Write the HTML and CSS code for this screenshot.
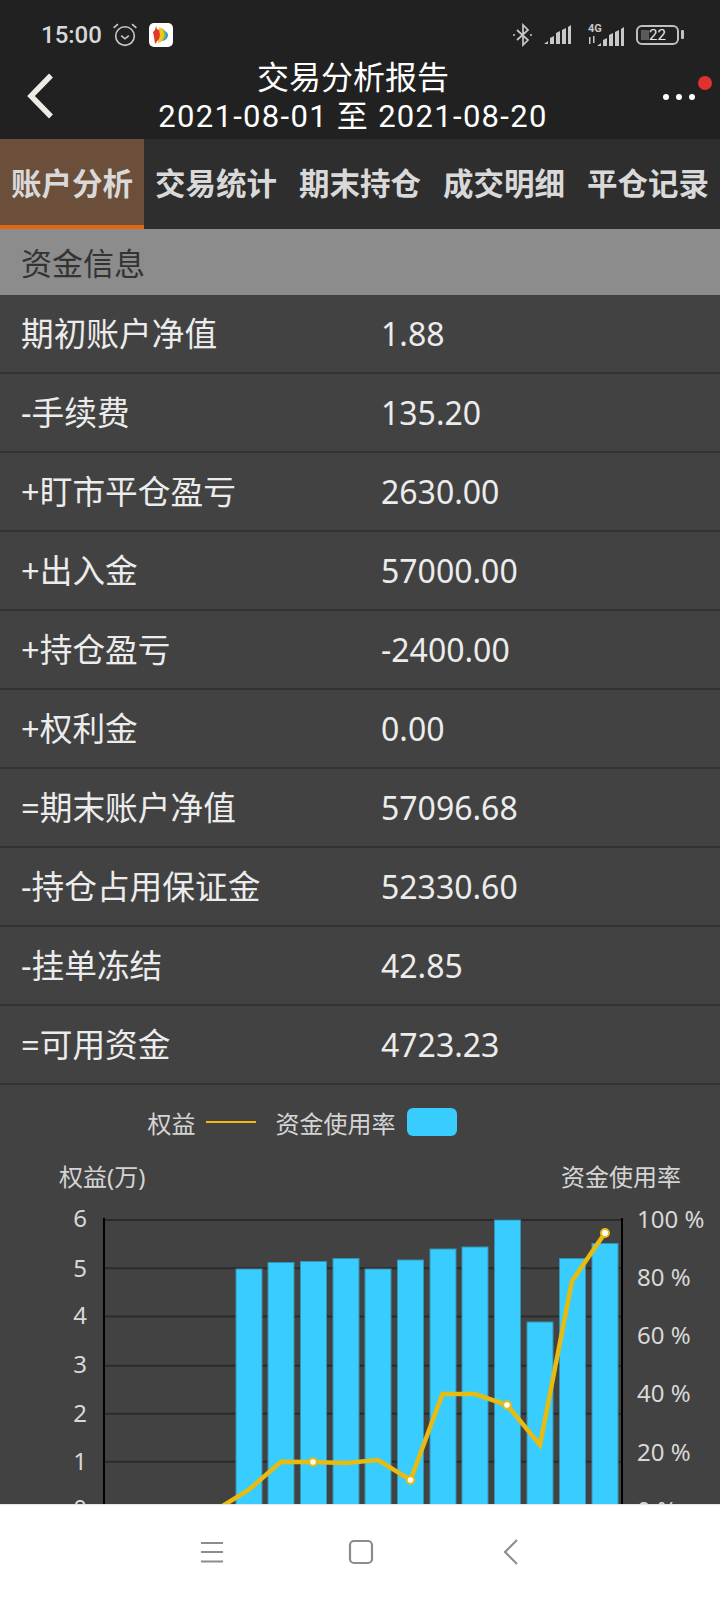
FILE: index.html
```html
<!DOCTYPE html>
<html lang="zh-CN">
<head>
    <meta charset="UTF-8">
    <meta name="viewport" content="width=device-width, initial-scale=1.0">
    <title>交易分析报告</title>
    <link rel="stylesheet" href="styles.css">
</head>
<body>

    <!-- Status bar and title -->
    <header class="header">
        <div class="status-bar">
            <span class="clock">15:00</span>
            <svg class="alarm" width="26" height="26" viewBox="0 0 24 24" fill="none" stroke="#c8c8c8" stroke-width="1.5">
                <circle cx="12" cy="13" r="8.6"/>
                <path d="M8.5 12.5l3.5 3 3.5-3"/>
                <path d="M1.5 5.5L5.5 2M22.5 5.5L18.5 2"/>
            </svg>
            <svg class="app-icon" width="24" height="24" viewBox="0 0 24 24">
                <rect width="24" height="24" rx="5" fill="#fff"/>
                <path d="M14 7c3 1 5 3 5 5s-2 5-5 6z" fill="#2f8fd8"/>
                <path d="M12 5c3 1 5 4 5 7s-3 6-6 7z" fill="#7cc242"/>
                <path d="M10 4c3 1 5 4 5 8s-3 7-6 8z" fill="#f6c51b"/>
                <path d="M7 3l1 3 2 1 1 5-1 4-4 5-1-7-1-5 2-2z" fill="#e2392d"/>
            </svg>
            <div class="status-icons">
                <svg class="bluetooth" width="22" height="24" viewBox="0 0 22 24" fill="none" stroke="#c8c8c8" stroke-width="1.7">
                    <path d="M5 7l11 10-5 5V2l5 5L5 17"/>
                    <circle cx="2" cy="12" r="1" fill="#c8c8c8" stroke="none"/>
                    <circle cx="19" cy="12" r="1" fill="#c8c8c8" stroke="none"/>
                </svg>
                <svg class="signal" width="28" height="20" viewBox="0 0 28 20" fill="#c8c8c8">
                    <path d="M0 19l4-3v3zM6 19v-6l4-2v8zM12 19V8l4-2v13zM18 19V5l4-2v16zM24 19V2l3-2v19z"/>
                </svg>
                <svg class="signal-4g" width="38" height="24" viewBox="0 0 38 24" fill="#c8c8c8">
                    <text class="net-text" x="1" y="9">4G</text>
                    <path d="M2 14h1.500v7H2zM6 13h1.500v7H6z"/>
                    <path d="M10 23l4-3v3zM16 23v-6l4-2v8zM22 23V12l4-2v13zM28 23V9l4-2v16zM34 23V6l3-2v19z"/>
                </svg>
                <div class="battery">
                    <span class="battery-level"></span>
                    <span class="battery-text">22</span>
                </div>
            </div>
        </div>
        <div class="title-bar">
            <svg class="back" width="30" height="46" viewBox="0 0 30 46" fill="none" stroke="#eeeae6" stroke-width="5.500">
                <path d="M25 2.500L5 23l20 20.500"/>
            </svg>
            <div class="title">
                <h1>交易分析报告</h1>
                <p>2021-08-01 至 2021-08-20</p>
            </div>
            <div class="more">
                <span class="dot"></span><span class="dot"></span><span class="dot"></span>
                <span class="badge"></span>
            </div>
        </div>
    </header>

    <!-- Tabs -->
    <nav class="tabs">
        <div class="tab active">账户分析</div>
        <div class="tab">交易统计</div>
        <div class="tab">期末持仓</div>
        <div class="tab">成交明细</div>
        <div class="tab">平仓记录</div>
    </nav>

    <main class="content">
        <div class="section-title">资金信息</div>

        <div class="row"><span class="row-label">期初账户净值</span><span>1.88</span></div>
        <div class="row"><span class="row-label">-手续费</span><span>135.20</span></div>
        <div class="row"><span class="row-label">+盯市平仓盈亏</span><span>2630.00</span></div>
        <div class="row"><span class="row-label">+出入金</span><span>57000.00</span></div>
        <div class="row"><span class="row-label">+持仓盈亏</span><span>-2400.00</span></div>
        <div class="row"><span class="row-label">+权利金</span><span>0.00</span></div>
        <div class="row"><span class="row-label">=期末账户净值</span><span>57096.68</span></div>
        <div class="row"><span class="row-label">-持仓占用保证金</span><span>52330.60</span></div>
        <div class="row"><span class="row-label">-挂单冻结</span><span>42.85</span></div>
        <div class="row"><span class="row-label">=可用资金</span><span>4723.23</span></div>

        <!-- Chart -->
        <section class="chart">
            <div class="legend">
                <span>权益</span>
                <span class="legend-line"></span>
                <span class="legend-name">资金使用率</span>
                <span class="legend-box"></span>
            </div>
            <div class="axis-titles">
                <span>权益(万)</span>
                <span>资金使用率</span>
            </div>
            <!-- viewBox uses the y of the page, so the numbers read like the screenshot -->
            <svg class="plot" width="720" height="320" viewBox="0 1200 720 320">
                <g class="grid">
                    <path d="M104 1220H622M104 1268.300H622M104 1316.500H622M104 1365.800H622M104 1413.800H622M104 1461.800H622M104 1510H622"/>
                </g>
                <g class="bars">
                    <rect x="236" y="1269" width="26" height="300"/>
                    <rect x="268" y="1262.500" width="26" height="300"/>
                    <rect x="300.500" y="1261.500" width="26" height="300"/>
                    <rect x="333" y="1258.500" width="26" height="300"/>
                    <rect x="365" y="1269" width="26" height="300"/>
                    <rect x="397.500" y="1260" width="26" height="300"/>
                    <rect x="430" y="1249" width="26" height="300"/>
                    <rect x="462" y="1247" width="26" height="300"/>
                    <rect x="494.500" y="1220" width="26" height="300"/>
                    <rect x="527" y="1322" width="26" height="300"/>
                    <rect x="559.500" y="1258.500" width="26" height="300"/>
                    <rect x="592" y="1243.500" width="26" height="300"/>
                </g>
                <path class="axis" d="M104 1218V1520M622 1218V1520"/>
                <polyline class="line" points="216,1510 248.500,1490 281,1461.800 313,1462 345.500,1463 378,1460 410.500,1480 442.500,1394 475,1394 507,1405 540,1445 572,1281 605,1233"/>
                <g class="marks">
                    <circle cx="313" cy="1462" r="3.800"/>
                    <circle cx="410.500" cy="1480" r="3.800"/>
                    <circle cx="507" cy="1405" r="3.800"/>
                    <circle cx="605" cy="1233" r="4"/>
                </g>
                <g class="ticks-left">
                    <text x="87" y="1227">6</text>
                    <text x="87" y="1277">5</text>
                    <text x="87" y="1324">4</text>
                    <text x="87" y="1373">3</text>
                    <text x="87" y="1422">2</text>
                    <text x="87" y="1470">1</text>
                    <text x="87" y="1517">0</text>
                </g>
                <g class="ticks-right">
                    <text x="637" y="1227.500">100 %</text>
                    <text x="637" y="1286">80 %</text>
                    <text x="637" y="1344">60 %</text>
                    <text x="637" y="1402">40 %</text>
                    <text x="637" y="1460.500">20 %</text>
                    <text x="637" y="1518.500">0 %</text>
                </g>
            </svg>
        </section>
    </main>

    <!-- Android navigation -->
    <footer class="system-nav">
        <svg width="24" height="22" viewBox="0 0 24 22" fill="none" stroke="#8c8c8c" stroke-width="2">
            <path d="M1 2h22M1 11h22M1 20.500h22"/>
        </svg>
        <svg class="nav-home" width="26" height="26" viewBox="0 0 26 26" fill="none" stroke="#8c8c8c" stroke-width="2.200">
            <rect x="2" y="2" width="22" height="22" rx="4"/>
        </svg>
        <svg class="nav-back" width="16" height="26" viewBox="0 0 16 26" fill="none" stroke="#8c8c8c" stroke-width="2">
            <path d="M14 1L2 13l12 12"/>
        </svg>
    </footer>

</body>
</html>
```

FILE: styles.css
```css
/* Basic reset */
* {
    margin: 0;
    padding: 0;
    box-sizing: border-box;
}

body {
    width: 720px;
    height: 1600px;
    display: flex;
    flex-direction: column;
    overflow: hidden;
    background-color: #424242;
    color: #e4e4e4;
    font-family: 'Noto Sans', 'Noto Sans CJK SC', sans-serif;
}

/* Header */
.header {
    height: 139px;
    flex-shrink: 0;
    background-color: #212121;
}

.status-bar {
    height: 54px;
    padding: 16px 36px 0 41px;
    display: flex;
    align-items: center;
}

.clock {
    font-family: Roboto, sans-serif;
    font-size: 24px;
    font-weight: 500;
    color: #d8d8d8;
}

.alarm {
    margin-left: 10px;
}

.app-icon {
    margin-left: 11px;
}

.status-icons {
    margin-left: auto;
    display: flex;
    align-items: center;
    gap: 10px;
}

.signal-4g {
    margin-left: 5px;
}

.net-text {
    font-family: Roboto, sans-serif;
    font-size: 11px;
    font-weight: 700;
}

.battery {
    position: relative;
    width: 43px;
    height: 20px;
    margin-left: 1px;
    margin-right: 5px;
    border: 2px solid #c0c0c0;
    border-radius: 6px;
    display: flex;
    align-items: center;
    justify-content: center;
}

/* battery tip */
.battery::after {
    content: '';
    position: absolute;
    right: -7px;
    top: 3px;
    width: 3px;
    height: 9px;
    background-color: #c0c0c0;
    border-radius: 1px;
}

.battery-level {
    position: absolute;
    left: 3px;
    top: 3px;
    bottom: 3px;
    width: 8px;
    background-color: #5a5a5a;
}

.battery-text {
    position: relative;
    font-family: Roboto, sans-serif;
    font-size: 15px;
    color: #e8e8e8;
}

.title-bar {
    height: 85px;
    position: relative;
    display: flex;
    align-items: center;
    justify-content: space-between;
    padding: 0 14px 0 26px;
}

.back {
    margin-top: -1px;
}

.title {
    position: absolute;
    left: 0;
    right: 14px;
    top: 1px;
    text-align: center;
    color: #fff;
}

.title h1 {
    font-size: 32px;
    font-weight: 400;
    line-height: 43px;
}

.title p {
    font-family: Roboto, 'Noto Sans CJK SC', sans-serif;
    font-size: 31px;
    letter-spacing: 1.3px;
    line-height: 38px;
}

.more {
    position: relative;
    display: flex;
    gap: 7px;
    margin-top: 0;
    margin-right: 11px;
}

.dot {
    width: 6px;
    height: 6px;
    border-radius: 50%;
    background-color: #fff;
}

.badge {
    position: absolute;
    right: -17px;
    top: -18px;
    width: 14px;
    height: 14px;
    border-radius: 50%;
    background-color: #e03131;
}

/* Tabs */
.tabs {
    height: 90px;
    flex-shrink: 0;
    display: grid;
    grid-template-columns: repeat(5, 144px);
    background-color: #2e2e2e;
}

.tab {
    display: flex;
    align-items: center;
    justify-content: center;
    padding-bottom: 4px;
    font-size: 30.5px;
    font-weight: 700;
    color: #d9d9d9;
}

.tab.active {
    background-color: #6b4f3a;
    border-bottom: 4px solid #e0670f;
    padding-bottom: 0;
}

/* Content */
.content {
    flex: 1;
    overflow: hidden;
}

.section-title {
    height: 66px;
    padding: 0 0 2px 21px;
    display: flex;
    align-items: center;
    background-color: #8c8c8c;
    color: #333;
    font-size: 31px;
}

.row {
    height: 79px;
    display: flex;
    align-items: center;
    padding-left: 21px;
    border-bottom: 2px solid #333;
    font-size: 32px;
    color: #ececec;
}

.row-label {
    width: 360px;
    font-size: 32.7px;
    line-height: 44px;
    margin-top: 1px;
}

/* Chart */
.chart {
    padding-top: 23px;
}

.legend {
    height: 28px;
    display: flex;
    align-items: center;
    justify-content: center;
    padding-right: 116px;
    font-size: 24px;
    color: #d4d4d4;
}

.legend-line {
    width: 50px;
    height: 2px;
    margin-left: 10px;
    background-color: #f2bb0c;
}

.legend-name {
    margin-left: 20px;
}

.legend-box {
    width: 50px;
    height: 28px;
    margin-left: 11px;
    border-radius: 6px;
    background-color: #39ccff;
}

.axis-titles {
    height: 34px;
    margin-top: 22px;
    margin-bottom: 8px;
    padding: 0 39px 0 59px;
    display: flex;
    align-items: center;
    justify-content: space-between;
    font-size: 24px;
    color: #d4d4d4;
}

.plot {
    display: block;
}

.grid path {
    fill: none;
    stroke: #2b2b2b;
    stroke-width: 2;
}

.bars rect {
    fill: #39ccff;
    stroke: #3592b3;
    stroke-width: 1;
}

.axis {
    fill: none;
    stroke: #000;
    stroke-width: 2;
}

.line {
    fill: none;
    stroke: #e8bb10;
    stroke-width: 4.5;
}

.marks circle {
    fill: #fff;
    stroke: #e8bb10;
    stroke-width: 2;
}

.plot text {
    font-size: 24px;
    fill: #d8d8d8;
}

.ticks-left text {
    text-anchor: end;
}

/* System navigation */
.system-nav {
    height: 96px;
    flex-shrink: 0;
    display: flex;
    align-items: center;
    padding-left: 200px;
    padding-bottom: 1px;
    background-color: #fff;
    border-top: 1px solid #e6e6e6;
}

.nav-home {
    margin-left: 124px;
}

.nav-back {
    margin-left: 129px;
}
```
